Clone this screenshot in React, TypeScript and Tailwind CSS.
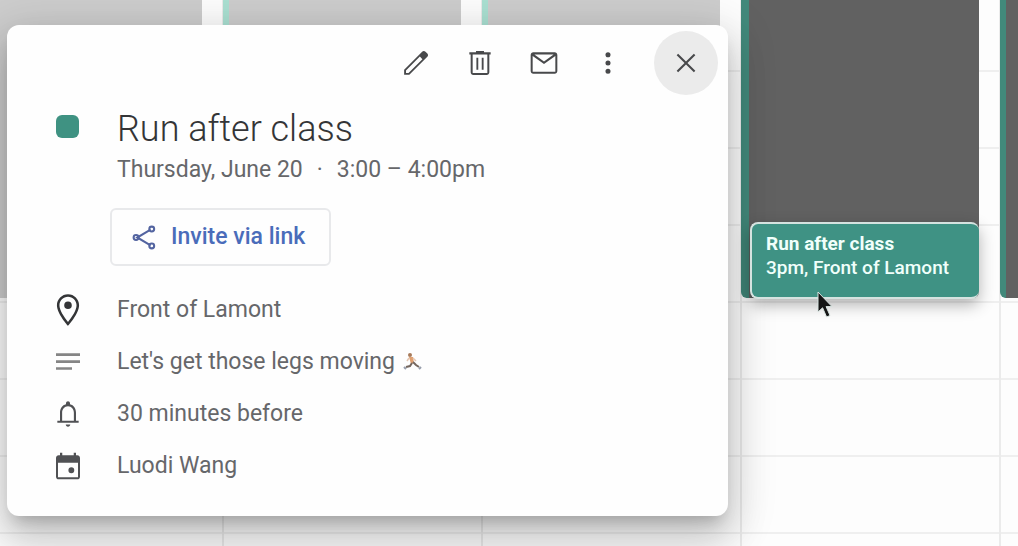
import React from "react";

const ICONS = {
  edit: "M20.5 4.9l-1.4-1.4c-.7-.7-1.8-.7-2.5 0L3.1 17v3.9H7L20.5 7.4c.7-.7.7-1.8 0-2.5zM6.4 19.5H4.5v-1.9L14.9 7.2l1.9 1.9L6.4 19.5z",
  trash:
    "M15 4V3H9v1H4v1.7h1V19c0 1.1.9 2 2 2h10c1.1 0 2-.9 2-2V5.700h1V4h-5zm2.500 15.500H6.500V5.700h11v13.800zM9.300 8h1.400v9H9.300zM13.300 8h1.400v9h-1.400z",
  mail: "M20 4H4c-1.100 0-2 .9-2 2v12c0 1.100.9 2 2 2h16c1.100 0 2-.9 2-2V6c0-1.100-.9-2-2-2zm-.8 1.600L12 10.800 4.800 5.600h14.400zM3.500 18.500V6.700L12 12.800l8.500-6.100v11.800h-17z",
  more: "M12 7.700a1.900 1.900 0 100-3.800 1.900 1.900 0 000 3.800zM12 13.900a1.900 1.900 0 100-3.800 1.900 1.900 0 000 3.800zM12 20.100a1.900 1.900 0 100-3.800 1.900 1.900 0 000 3.800z",
  close:
    "M19 6.100L17.900 5 12 10.900 6.100 5 5 6.100 10.900 12 5 17.900 6.100 19 12 13.100 17.900 19 19 17.900 13.100 12z",
  pin: "M12 2C8.13 2 5 5.130 5 9c0 5.250 7 13 7 13s7-7.750 7-13c0-3.870-3.130-7-7-7zM6.600 9c0-2.980 2.420-5.400 5.400-5.400s5.400 2.420 5.400 5.400c0 3.100-2.900 7.500-5.400 10.600C9.550 16.500 6.600 12.100 6.600 9zM12 6.600a2.400 2.400 0 100 4.800 2.400 2.400 0 000-4.800z",
  notes: "M3 5.500h18v2H3zM3 10.700h18v2H3zM3 15.900h12v2H3z",
  bell: "M18 17v-6c0-3.070-1.630-5.640-4.500-6.320V4c0-.83-.67-1.500-1.500-1.500s-1.500.67-1.500 1.500v.68C7.640 5.360 6 7.920 6 11v6H4v1.600h16V17h-2zm-1.600 0H7.600v-6c0-2.600 1.700-4.900 4.400-4.900s4.400 2.300 4.400 4.900v6zM12 21.500c1 0 1.700-.8 1.700-1.700h-3.400c0 .9.700 1.700 1.700 1.700z",
  event:
    "M19 4h-1V2h-1.700v2H7.700V2H6v2H5c-1.100 0-2 .9-2 2v14c0 1.100.9 2 2 2h14c1.100 0 2-.9 2-2V6c0-1.100-.9-2-2-2zm.5 16.500h-15V9.500h15v11zM14.500 13a2.200 2.200 0 100 4.400 2.200 2.200 0 000-4.400z",
};

function Icon({ name, className }: { name: keyof typeof ICONS; className?: string }) {
  return (
    <svg viewBox="0 0 24 24" aria-hidden="true" fill="currentColor" className={className ?? "size-8"}>
      <path d={ICONS[name]} />
    </svg>
  );
}

function HourLines() {
  return (
    <div>
      <div className="h-[72px] border-b-2 border-[#efefef]" />
      {[1, 2, 3, 4, 5, 6, 7].map((hour) => (
        <div key={hour} className="h-[77px] border-b-2 border-[#efefef]" />
      ))}
    </div>
  );
}

function Calendar() {
  return (
    <main className="grid h-screen grid-cols-[222fr_259fr_259fr_259fr_19fr] overflow-hidden">
      <div className="relative">
        <HourLines />
        <div className="absolute left-0 right-5 top-0 h-[298px] bg-[#cdcdcd]" />
      </div>
      <div className="relative border-l-2 border-[#ebebeb]">
        <HourLines />
        <div className="absolute -left-px right-5 top-0 h-[298px] border-l-6 border-[#aae0d2] bg-[#cdcdcd]" />
      </div>
      <div className="relative border-l-2 border-[#ebebeb]">
        <HourLines />
        <div className="absolute -left-px right-5 top-0 h-[298px] border-l-6 border-[#aae0d2] bg-[#cdcdcd]" />
      </div>
      <div className="relative border-l-2 border-[#ebebeb]">
        <HourLines />
        <div className="absolute -left-px right-5 top-0 h-[298px] rounded-b-md border-l-8 border-[#42897b] bg-[#616161]" />
        <button
          type="button"
          className="absolute left-2 right-5 top-[222px] z-20 h-[77px] rounded-lg border-2 border-r-0 border-[#d5e3e0] bg-[#3f9284] px-3.5 pt-2 text-left text-[19px] leading-6 text-[#f0fffb] shadow-[0_6px_16px_rgba(0,0,0,0.3)]"
        >
          <span className="block h-full whitespace-nowrap">
            <strong className="block font-bold">Run after class</strong>
            <span className="block font-medium">3pm, Front of Lamont</span>
          </span>
        </button>
        <svg viewBox="0 0 16 28" aria-hidden="true" className="absolute left-[75px] top-[291px] z-30 h-7 w-4">
          <path
            d="M1 1v20l4.6-4.2 4 9.2 3.4-1.5-3.9-8.9H15z"
            fill="#151515"
            stroke="#d9e5e2"
            strokeWidth="1"
          />
        </svg>
      </div>
      <div className="relative border-l-2 border-[#ebebeb]">
        <HourLines />
        <div className="absolute -left-px right-0 top-0 h-[298px] rounded-bl-md border-l-6 border-[#42897b] bg-[#616161]" />
      </div>
    </main>
  );
}

function Runner() {
  return (
    <svg viewBox="0 0 20 20" role="img" aria-label="runner" className="ml-2 size-5">
      <circle cx="7" cy="3" r="2" fill="#a87b5b" />
      <path d="M6 5l4 0 1 6-3 1z" fill="#e0a070" />
      <path d="M6 6l-2 3M10 6l3 3" fill="none" stroke="#e3c6b2" strokeWidth="1.5" />
      <path d="M9 11l-2 3-4 1M10 10l3 3 3 2" fill="none" stroke="#75675f" strokeWidth="2" />
      <path d="M1 15l2 2M16 17l2-2" stroke="#969dab" strokeWidth="2" />
    </svg>
  );
}

const ACTIONS = [
  { icon: "edit", label: "Edit event" },
  { icon: "trash", label: "Delete event" },
  { icon: "mail", label: "Email guests" },
  { icon: "more", label: "Options" },
] as const;

function DetailRow({ icon, children }: { icon: React.ReactNode; children: React.ReactNode }) {
  return (
    <li className="flex h-[52px] items-center">
      <span className="flex w-[69px] shrink-0 items-center">
        <span className="flex w-10 justify-center">{icon}</span>
      </span>
      <span className="flex items-center">{children}</span>
    </li>
  );
}

function EventDialog() {
  return (
    <section
      role="dialog"
      aria-labelledby="event-title"
      className="absolute left-[7px] top-[25px] z-10 w-[70.8%] min-w-[560px] rounded-xl bg-[#fefefe] pb-6 text-[#66676a] shadow-[0_24px_38px_3px_rgba(0,0,0,0.14),0_9px_46px_8px_rgba(0,0,0,0.12),0_11px_15px_-7px_rgba(0,0,0,0.2)]"
    >
      <div className="flex items-center justify-end pr-2.5 pt-1.5 text-[#48494b]">
        {ACTIONS.map((action) => (
          <button
            key={action.icon}
            type="button"
            aria-label={action.label}
            className="flex size-16 items-center justify-center"
          >
            <Icon name={action.icon} />
          </button>
        ))}
        <button
          type="button"
          aria-label="Close"
          className="ml-3.5 flex size-16 items-center justify-center rounded-full bg-[#ebebeb]"
        >
          <Icon name="close" />
        </button>
      </div>
      <div className="flex pl-[41px] pt-3.5">
        <div className="w-[69px] shrink-0 pl-2 pt-1.5">
          <div className="size-[23px] rounded-md bg-[#3f9282]" />
        </div>
        <div>
          <h1 id="event-title" className="text-[36px] font-light leading-10 text-[#343537]">
            Run after class
          </h1>
          <p className="flex gap-3.5 text-[23px] leading-[42px]">
            <span>Thursday, June 20</span>
            <span>·</span>
            <span>3:00 – 4:00pm</span>
          </p>
        </div>
      </div>
      <div className="pl-[103px] pt-[17px]">
        <button
          type="button"
          className="flex h-[58px] items-center gap-3 rounded-md border-2 border-[#e8e9eb] pl-[18px] pr-6 text-[23px] font-medium text-[#4a6cba]"
        >
          <svg
            viewBox="0 0 24 24"
            aria-hidden="true"
            fill="none"
            stroke="#5364a0"
            strokeWidth="1.7"
            className="size-[29px]"
          >
            <path d="M17 5.5L6 12l11 6.5" />
            <circle cx="18" cy="5" r="2" />
            <circle cx="5" cy="12" r="2" />
            <circle cx="18" cy="19" r="2" />
          </svg>
          Invite via link
        </button>
      </div>
      <ul className="pl-[41px] pt-[18px] text-[23px]">
        <DetailRow icon={<Icon name="pin" className="size-[38px] text-[#343537]" />}>Front of Lamont</DetailRow>
        <DetailRow icon={<Icon name="notes" className="size-8 text-[#858585]" />}>
          Let's get those legs moving
          <Runner />
        </DetailRow>
        <DetailRow icon={<Icon name="bell" className="size-8 text-[#505154]" />}>30 minutes before</DetailRow>
        <DetailRow icon={<Icon name="event" className="size-8 text-[#505154]" />}>Luodi Wang</DetailRow>
      </ul>
    </section>
  );
}

export default function App() {
  return (
    <div className="relative min-h-screen overflow-hidden bg-[#fdfdfd] font-[Roboto,sans-serif]">
      <Calendar />
      <EventDialog />
    </div>
  );
}
